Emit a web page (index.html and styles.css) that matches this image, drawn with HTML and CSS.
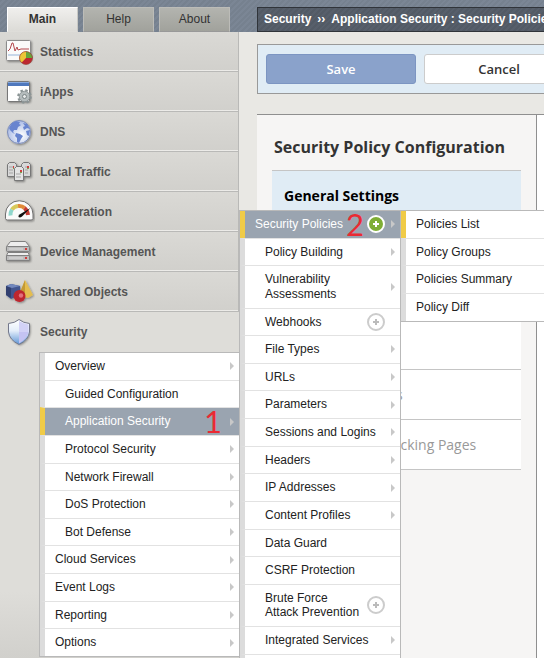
FILE: index.html
```
<!DOCTYPE html>
<html lang="en">
<head>
<meta charset="utf-8">
<title>Security Policies</title>
<link rel="stylesheet" href="styles.css">
</head>
<body>
<header class="topbar">
  <nav class="tabs">
    <a href="#" class="tab tab-active">Main</a>
    <a href="#" class="tab">Help</a>
    <a href="#" class="tab">About</a>
  </nav>
  <div class="crumbs">Security<span class="crumb-sep">››</span>Application Security : Security Policies</div>
</header>
<div class="body">
  <nav class="sidebar">
    <a href="#" class="section">
      <svg class="icon" viewBox="0 0 32 32"><defs><filter id="sh" x="-20%" y="-20%" width="150%" height="150%"><feDropShadow dx="1" dy="1" stdDeviation="1" flood-opacity=".4"/></filter></defs><g filter="url(#sh)"><rect x="3.500" y="4.500" width="24" height="20" rx="1" fill="#fafafa" stroke="#8b8b8b"/><path d="M5 18h21v2H5z" fill="#c8d7ea"/><path d="M5 15l2-2 2-6h1l2 8 2-4 1 3 3-1h8" fill="none" stroke="#b5474d"/></g><circle cx="23" cy="22" r="6.500" fill="#bd2830"/><path d="M23 22V15.500A6.500 6.500 0 0 0 18.500 26.700z" fill="#ecc637"/><path d="M23 22V15.500A6.500 6.500 0 0 1 29.500 22z" fill="#67a53a"/><circle cx="23" cy="22" r="6.500" fill="none" stroke="#8d3b30" stroke-opacity=".6"/></svg>
      Statistics</a>
    <a href="#" class="section">
      <svg class="icon" viewBox="0 0 32 32"><g filter="url(#sh)"><rect x="4.500" y="5.500" width="22" height="20" rx="1" fill="#fff" stroke="#777"/><path d="M5 6h21v4H5z" fill="#4f78bd"/><path d="M5 6h21v1H5z" fill="#86a8dc"/></g><circle cx="21.500" cy="20.500" r="6.300" fill="none" stroke="#8b9495" stroke-width="2" stroke-dasharray="2.500 2.448"/><circle cx="21.500" cy="20.500" r="5.300" fill="#b4bbbc" stroke="#8b9495"/><circle cx="21.500" cy="20.500" r="2" fill="#e6e9e9" stroke="#7c8586"/></svg>
      iApps</a>
    <a href="#" class="section">
      <svg class="icon" viewBox="0 0 32 32"><defs><radialGradient id="gl" cx=".6" cy=".65" r=".65"><stop offset="0" stop-color="#fff"/><stop offset="1" stop-color="#a9bae5"/></radialGradient></defs><circle cx="16" cy="16" r="11.500" fill="url(#gl)" stroke="#7c8cb8" filter="url(#sh)"/><path d="M6 12l3-5 4-2 4 1-1 2 2 1-3 2-1 3-3 0-1 2 2 2-2-1-3-3zM13 17l4 1 3 2-2 3-2 4-2-1 0-4-2-2zM20 7l4 1 3 5-3-1-3 2-1-3 2-1zM23 15l4-1-1 6-2-1z" fill="#6884cf"/></svg>
      DNS</a>
    <a href="#" class="section">
      <svg class="icon" viewBox="0 0 32 32"><g filter="url(#sh)" stroke="#777" fill="#d8d8d8"><path d="M4.500 20.500V8.500l2-2h5l2 2v12z"/><path d="M18.500 20.500V8.500l2-2h5l2 2v12z"/><path d="M11.500 24.500V12.500l2-2h5l2 2v12z" fill="#e4e4e4"/></g><path d="M6 11h4M6 14h4M6 17h4M22 11h3M22 14h3M22 17h3M13 18h5M13 21h5" stroke="#a5a5a5"/><path d="M10 10h1v2h-1zM24 10h2v2h-2zM17 14h2v2h-2z" fill="#cf3d3d"/><path d="M10 12h1v1h-1zM24 12h2v1h-2zM17 16h2v1h-2z" fill="#7ca550"/></svg>
      Local Traffic</a>
    <a href="#" class="section">
      <svg class="icon" viewBox="0 0 32 32"><path d="M2.500 22.500V18A13.500 13 0 0 1 30 18V22.500q0 1.500-2 1.500H4.500q-2 0-2-1.500z" fill="#fafafa" stroke="#6f6f6f" filter="url(#sh)"/><g fill="none" stroke-width="4"><path d="M7.500 19.500A8.500 9 0 0 1 9 13.500" stroke="#8fd6cc"/><path d="M9 13.500Q11 10.500 15 10" stroke="#d8c95a"/><path d="M15 10Q19 9.500 21.500 12" stroke="#e08a38"/><path d="M21.500 12Q24.500 14.500 25 19" stroke="#c43b33"/></g><path d="M16.500 18.500l11-6.500-8.500 8.500q-2 1.500-3.500 0.500-.5-1.500 1-2.500z" fill="#111"/></svg>
      Acceleration</a>
    <a href="#" class="section">
      <svg class="icon" viewBox="0 0 32 32"><g filter="url(#sh)" stroke="#808080"><path d="M3.500 10.500l4-5h15l4 5v4h-23z" fill="#ededed"/><rect x="3.500" y="10.500" width="23" height="5" rx="1" fill="#bcbcbc"/><path d="M5 16.500h20l1.500 3v4q0 1-1 1h-21q-1 0-1-1v-4z" fill="#ededed"/><path d="M3.500 19.500h23v5h-23z" fill="#bcbcbc"/></g><path d="M6 13h14M6 22h14" stroke="#dedede"/><path d="M22 12h2v2h-2zM22 21h2v2h-2z" fill="#cf3d3d"/></svg>
      Device Management</a>
    <a href="#" class="section">
      <svg class="icon" viewBox="0 0 32 32"><g filter="url(#sh)"><path d="M3 10l5-2 9 2v9l-9 4-5-4z" fill="#42558f"/><path d="M3 10l5-2 9 2-8 2z" fill="#7187bd"/><path d="M3 10l5 2v10l-5-3z" fill="#33406f"/><path d="M22 4l8 15-5 3-9-3z" fill="#e4bd50"/><path d="M22 4l-6 15 6 2z" fill="#c39a35"/><circle cx="16.500" cy="20" r="6" fill="#bd252e"/></g><circle cx="18" cy="19.500" r="2.200" fill="#e2707c"/></svg>
      Shared Objects</a>
    <div class="section-open">
      <a href="#" class="section">
        <svg class="icon" viewBox="0 0 32 32"><defs><linearGradient id="sd" x2="0" y2="1"><stop offset="0" stop-color="#fff"/><stop offset=".45" stop-color="#e4eefa"/><stop offset="1" stop-color="#5f96d6"/></linearGradient></defs><path d="M16 3.500q4 3.500 10.500 4V16q-1 8-10.500 12.500Q6.500 24 5.500 16V7.500Q12 7 16 3.500z" fill="url(#sd)" filter="url(#sh)"/><path d="M16 5q4 2.500 9.500 3.500V16H16z" fill="#d2d2f6"/><path d="M16 16h9.500Q24 23 16 27.500z" fill="#c4c3f2"/><path d="M16 3.500q4 3.500 10.500 4V16q-1 8-10.500 12.500Q6.500 24 5.500 16V7.500Q12 7 16 3.500z" fill="none" stroke="#74788b"/></svg>
        Security</a>
      <ul class="menu menu-security">
        <li><a href="#" class="item more">Overview</a></li>
        <li><a href="#" class="item sub">Guided Configuration</a></li>
        <li class="current"><a href="#" class="item sub more">Application Security</a><span class="step step-one">1</span></li>
        <li><a href="#" class="item sub more">Protocol Security</a></li>
        <li><a href="#" class="item sub more">Network Firewall</a></li>
        <li><a href="#" class="item sub more">DoS Protection</a></li>
        <li><a href="#" class="item sub more">Bot Defense</a></li>
        <li><a href="#" class="item more">Cloud Services</a></li>
        <li><a href="#" class="item more">Event Logs</a></li>
        <li><a href="#" class="item more">Reporting</a></li>
        <li><a href="#" class="item more">Options</a></li>
      </ul>
    </div>
  </nav>
  <main class="content">
    <div class="actions">
      <button type="button" class="btn btn-save">Save</button>
      <button type="button" class="btn">Cancel</button>
    </div>
    <div class="panels">
      <section class="config">
        <h1>Security Policy Configuration</h1>
        <ul class="settings">
          <li class="chosen">General Settings</li>
          <li></li>
          <li></li>
          <li></li>
          <li>Threat Campaigns</li>
          <li>Response and Blocking Pages</li>
        </ul>
      </section>
      <section class="detail"></section>
    </div>
  </main>
</div>
<ul class="menu menu-application">
  <li class="current"><a href="#" class="item more">Security Policies</a><span class="step step-two">2</span>
    <button type="button" class="add" aria-label="Create policy"><svg viewBox="0 0 18 18"><circle cx="9" cy="9" r="8" fill="#7fae35" stroke="#fff" stroke-width="2"/><path d="M9 6v6M6 9h6" stroke="#fff" stroke-width="2"/></svg></button></li>
  <li><a href="#" class="item sub more">Policy Building</a></li>
  <li><a href="#" class="item sub more">Vulnerability<br>Assessments</a></li>
  <li><a href="#" class="item sub">Webhooks</a><button type="button" class="add" aria-label="Create webhook"><svg viewBox="0 0 18 18"><circle cx="9" cy="9" r="8" fill="#fff" stroke="#ccc" stroke-width="2"/><path d="M9 6v6M6 9h6" stroke="#bbb" stroke-width="2"/></svg></button></li>
  <li><a href="#" class="item sub more">File Types</a></li>
  <li><a href="#" class="item sub more">URLs</a></li>
  <li><a href="#" class="item sub more">Parameters</a></li>
  <li><a href="#" class="item sub more">Sessions and Logins</a></li>
  <li><a href="#" class="item sub more">Headers</a></li>
  <li><a href="#" class="item sub more">IP Addresses</a></li>
  <li><a href="#" class="item sub more">Content Profiles</a></li>
  <li><a href="#" class="item sub">Data Guard</a></li>
  <li><a href="#" class="item sub">CSRF Protection</a></li>
  <li><a href="#" class="item sub">Brute Force<br>Attack Prevention</a><button type="button" class="add" aria-label="Create brute force prevention"><svg viewBox="0 0 18 18"><circle cx="9" cy="9" r="8" fill="#fff" stroke="#ccc" stroke-width="2"/><path d="M9 6v6M6 9h6" stroke="#bbb" stroke-width="2"/></svg></button></li>
  <li><a href="#" class="item sub more">Integrated Services</a></li>
  <li class="tail"></li>
</ul>
<ul class="menu menu-policies">
  <li class="marked"><a href="#" class="item">Policies List</a></li>
  <li><a href="#" class="item">Policy Groups</a></li>
  <li><a href="#" class="item">Policies Summary</a></li>
  <li><a href="#" class="item">Policy Diff</a></li>
</ul>
</body>
</html>
```

FILE: styles.css
```
* { box-sizing: border-box; }
html { height: 100%; overflow: hidden; }
body {
  position: relative;
  display: flex;
  flex-direction: column;
  height: 100%;
  margin: 0;
  overflow: hidden;
  background: #e9e8e4;
  color: #333;
  font: 12px "Liberation Sans", Arial, sans-serif;
}
a { color: inherit; text-decoration: none; }
ul { margin: 0; padding: 0; list-style: none; }

.topbar {
  display: flex;
  align-items: flex-end;
  flex: none;
  height: 32px;
  background: repeating-linear-gradient(135deg, #76818f 0 2px, #7b8695 2px 4px);
}
.tabs { display: flex; gap: 5px; flex: none; width: 257px; padding-left: 7px; }
.tab {
  width: 71px;
  height: 25px;
  border: 1px solid #bcbcb8;
  border-bottom-color: #999;
  background: linear-gradient(#b3b4af, #a1a29c);
  line-height: 22px;
  text-align: center;
}
.tab-active { border-color: #fff #c8c8c4 #deddd9 #fff; background: linear-gradient(#f0efed, #dcdbd7); font-weight: bold; }
.crumbs {
  flex: 1;
  height: 25px;
  overflow: hidden;
  padding-left: 6px;
  border: 1px solid #30343a;
  border-right: 0;
  background: repeating-linear-gradient(135deg, #525a65 0 2px, #575f6b 2px 4px);
  color: #fff;
  font-weight: bold;
  line-height: 22px;
  white-space: nowrap;
}
.crumb-sep { margin: 0 6px; }

.body { display: flex; flex: 1; min-height: 0; }
.sidebar { display: flex; flex-direction: column; flex: none; width: 239px; }
.section {
  display: flex;
  align-items: center;
  gap: 5px;
  height: 40px;
  padding-left: 3px;
  border-right: 1px solid #b9b9b7;
  border-bottom: 1px solid #b9b9b7;
  background: linear-gradient(#dad9d5, #d1d0cc);
  box-shadow: inset 0 -1px #ecebe8;
  color: #555;
  font-weight: bold;
}
.icon { flex: none; width: 32px; height: 32px; }
.section-open { flex: 1; background: linear-gradient(#deddd9 0 280px, #d1d0cc); }
.section-open .section { border: 0; background: none; box-shadow: none; }

.menu { border: 1px solid #b9b9b9; background: #fff; color: #222; line-height: 1.22; }
.menu li { position: relative; border-left: 5px solid #dcdcdc; }
.menu li + li { border-top: 1px solid #e2e2e2; }
.menu .current { border-left-color: #f0cb47; background: #9aa4b0; color: #fff; }
.menu .marked { border-left-color: #f0cb47; }
.item { display: block; padding: 6px 10px; }
.sub { padding-left: 20px; }
.more::after {
  content: "";
  position: absolute;
  top: calc(50% - 4px);
  right: 5px;
  border: 4px solid transparent;
  border-left-color: #c8c8c8;
  border-right: 0;
}
.menu-security { width: 201px; margin-left: 39px; }
.menu-application { position: absolute; top: 210px; left: 239px; width: 162px; }
.menu-policies { position: absolute; top: 210px; left: 400px; width: 162px; }
.tail { height: 28px; }
.step {
  position: absolute;
  top: 0;
  color: #ea2a33;
  font: 31px/27px Lato, sans-serif;
}
.step-one { right: 17px; }
.step-two { right: 36px; }
.add {
  position: absolute;
  top: calc(50% - 9px);
  right: 15px;
  width: 18px;
  height: 18px;
  padding: 0;
  border: 0;
  background: none;
}
.add svg { display: block; }

.content { display: flex; flex-direction: column; flex: 1; min-width: 0; padding: 12px 0 0 18px; font-family: "Open Sans", sans-serif; }
.actions {
  display: flex;
  gap: 8px;
  flex: none;
  height: 50px;
  padding: 9px 8px;
  overflow: hidden;
  border: 1px solid #999;
  border-right: 0;
  background: #e0ecf5;
}
.btn {
  flex: none;
  width: 150px;
  height: 30px;
  padding: 0;
  border: 1px solid #ccc;
  border-radius: 3px;
  background: #fff;
  color: #333;
  font: 600 13px "Open Sans", sans-serif;
}
.btn-save { border-color: #7c95c2; background: #8aa2cb; color: #fff; }
.panels { display: flex; flex: 1; margin-top: 20px; border-top: 1px solid #8f8f8f; background: #f6f5f4; }
.config { flex: none; width: 280px; padding: 0 15px; border-right: 1px solid #8f8f8f; }
.config h1 { margin: 0; padding: 12px 0 3px 2px; font-size: 16px; font-weight: 700; line-height: 40px; }
.settings { border-top: 1px solid #c5c5c5; background: #fff; }
.settings li {
  height: 50px;
  padding-left: 12px;
  border-bottom: 1px solid #c5c5c5;
  color: #999;
  font-size: 14px;
  line-height: 50px;
  white-space: nowrap;
}
.settings .chosen { height: 49px; background: #e0ecf5; color: #000; font-weight: 700; }
.detail { flex: 1; background: #fff; }
```
